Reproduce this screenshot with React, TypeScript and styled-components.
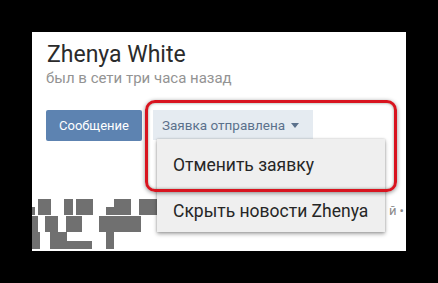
import React from "react";
import styled, { createGlobalStyle } from "styled-components";

const Global = createGlobalStyle`
  html, body { margin: 0; padding: 0; background: #000; }
  body { font-family: Roboto, "Noto Sans", Arial, sans-serif; }
`;

const Screen = styled.div`
  width: 438px;
  height: 283px;
  background: #000;
  padding: 32px 0 0 32px;
  box-sizing: border-box;
`;

const Panel = styled.div`
  position: relative;
  width: 374px;
  height: 219px;
  background: #fff;
  box-sizing: border-box;
  padding: 9px 0 0 14px;
  display: flex;
  flex-direction: column;
  overflow: hidden;
`;

const Title = styled.div`
  font-size: 23px;
  line-height: 27px;
  color: #2b2b2b;
  padding-left: 1px;
`;

const Status = styled.div`
  margin-top: 1px;
  font-size: 15px;
  line-height: 18px;
  color: #939393;
`;

const Actions = styled.div`
  margin-top: 23px;
  display: flex;
  align-items: flex-start;
  gap: 11px;
`;

const Primary = styled.div`
  width: 96px;
  height: 31px;
  border-radius: 2px;
  background: #5d83b1;
  color: #fff;
  font-size: 13px;
  display: flex;
  align-items: center;
  justify-content: center;
`;

const Trigger = styled.div`
  width: 160px;
  height: 30px;
  background: #e5ebf1;
  color: #5b718c;
  font-size: 13.5px;
  display: flex;
  align-items: center;
  padding-left: 9px;
  box-sizing: border-box;
  gap: 6px;
`;

const Bottom = styled.div`
  margin-top: 58px;
  margin-left: -14px;
  display: flex;
  align-items: flex-start;
  justify-content: space-between;
`;

const Tail = styled.div`
  margin-top: 4px;
  margin-right: 2px;
  font-size: 13px;
  color: #8a8a8a;
  white-space: nowrap;
`;

const Menu = styled.div`
  position: absolute;
  left: 125px;
  top: 107px;
  width: 228px;
  background: #efefef;
  box-shadow: 0 2px 4px rgba(0, 0, 0, 0.35), 0 0 2px rgba(0, 0, 0, 0.2);
  display: flex;
  flex-direction: column;
`;

const Item = styled.div<{ $h: number }>`
  height: ${(p) => p.$h}px;
  box-sizing: border-box;
  padding-top: 4px;
  display: flex;
  align-items: center;
  padding-left: 16px;
  font-size: 17.5px;
  color: #262626;
`;

const Highlight = styled.div`
  position: absolute;
  left: 113px;
  top: 68px;
  width: 252px;
  height: 92px;
  box-sizing: border-box;
  border: 3px solid #d8141f;
  border-radius: 10px;
  box-shadow: 0 1px 4px rgba(0, 0, 0, 0.45), inset 0 0 3px rgba(90, 110, 90, 0.7);
`;

const blocks: [number, number, number, number][] = [
  [0, 8, 3, 8],
  [6, 0, 13, 16],
  [32, 0, 9, 16],
  [44, 0, 17, 16],
  [74, 8, 10, 8],
  [82, 0, 17, 16],
  [107, 0, 20, 16],
  [0, 17, 6, 16],
  [13, 17, 13, 16],
  [34, 17, 16, 16],
  [67, 17, 42, 16],
  [0, 33, 8, 17],
  [18, 33, 17, 17],
  [35, 42, 25, 8],
  [74, 33, 8, 17],
];

const Mosaic = () => (
  <svg width="127" height="50" viewBox="0 0 127 50">
    {blocks.map(([x, y, w, h], i) => (
      <rect key={i} x={x} y={y} width={w} height={h} fill="#707070" />
    ))}
  </svg>
);

export default function App() {
  return (
    <>
      <Global />
      <Screen>
        <Panel>
          <Title>Zhenya White</Title>
          <Status>был в сети три часа назад</Status>
          <Actions>
            <Primary>Сообщение</Primary>
            <Trigger>
              Заявка отправлена
              <svg width="8" height="5" viewBox="0 0 8 5">
                <path d="M0 0 L8 0 L4 5 Z" fill="#5b718c" />
              </svg>
            </Trigger>
          </Actions>
          <Bottom>
            <Mosaic />
            <Tail>й •</Tail>
          </Bottom>
          <Menu>
            <Item $h={47}>Отменить заявку</Item>
            <Item $h={46}>Скрыть новости Zhenya</Item>
          </Menu>
          <Highlight />
        </Panel>
      </Screen>
    </>
  );
}
